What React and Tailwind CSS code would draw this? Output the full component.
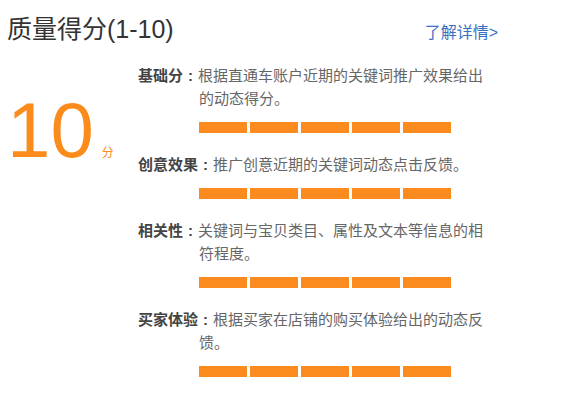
import React from "react";

const rows = [
  { label: "基础分", text: "根据直通车账户近期的关键词推广效果给出的动态得分。" },
  { label: "创意效果", text: "推广创意近期的关键词动态点击反馈。" },
  { label: "相关性", text: "关键词与宝贝类目、属性及文本等信息的相符程度。" },
  { label: "买家体验", text: "根据买家在店铺的购买体验给出的动态反馈。" },
];

function Bars() {
  return (
    <div className="flex gap-[3px] pl-[61px] mt-[12px]">
      {[0, 1, 2, 3, 4].map((i) => (
        <div key={i} className="w-[48px] h-[11px] bg-[#fb8b1f]" />
      ))}
    </div>
  );
}

export default function App() {
  return (
    <div
      className="w-[566px] h-[402px] bg-white overflow-hidden"
      style={{ fontFamily: '"Liberation Sans","Noto Sans CJK SC",sans-serif' }}
    >
      <div className="flex items-start pt-[13px] pl-[7px] pr-[68px]">
        <div className="text-[25px] leading-[32px] text-[#333333]">质量得分(1-10)</div>
        <div className="ml-auto mt-[10px] text-[16px] leading-[20px] text-[#3a6fc4]">了解详情&gt;</div>
      </div>
      <div className="flex mt-[19px]">
        <div className="w-[138px] shrink-0 pl-[7px] pt-[27px]">
          <div className="flex items-baseline">
            <span className="text-[78px] leading-none text-[#fb8c1c]">10</span>
            <span className="ml-[8px] text-[12px] text-[#fb8c1c]">分</span>
          </div>
        </div>
        <div className="w-[352px] flex flex-col gap-[20px]">
          {rows.map((r) => (
            <div key={r.label}>
              <p className="pl-[61px] -indent-[61px] text-[15px] leading-[23px] text-[#666666]">
                <span className="font-bold text-[#444444]">
                  {r.label}
                  <span className="inline-block w-[15px] indent-0 text-center">:</span>
                </span>
                {r.text}
              </p>
              <Bars />
            </div>
          ))}
        </div>
      </div>
    </div>
  );
}
